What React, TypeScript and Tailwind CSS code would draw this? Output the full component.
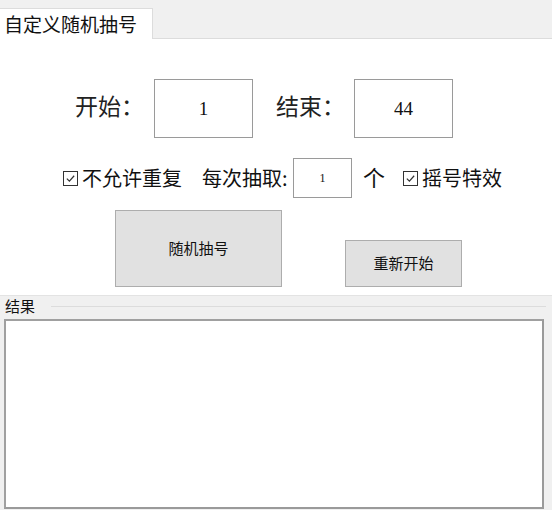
import { useState } from "react";

const cjk = "font-['Microsoft_YaHei','Noto_Sans_CJK_SC',sans-serif]";
const serif = "font-['Liberation_Serif','Noto_Sans_CJK_SC',serif]";

function Check({ label, checked }: { label: string; checked: boolean }) {
  return (
    <label className="flex items-center">
      <span className="mr-[4px] flex h-[15px] w-[15px] items-center justify-center border border-[#333]">
        {checked && (
          <svg viewBox="0 0 12 12" className="h-[11px] w-[11px]">
            <path d="M2 6.2 L4.8 9 L10 3" fill="none" stroke="#333" strokeWidth="1.3" />
          </svg>
        )}
      </span>
      <span>{label}</span>
    </label>
  );
}

export default function App() {
  const [start, setStart] = useState("1");
  const [end, setEnd] = useState("44");
  const [count, setCount] = useState("1");

  return (
    <div className={`h-[510px] w-[552px] overflow-hidden bg-[#f0f0f0] ${cjk} text-[#111]`}>
      {/* tab strip */}
      <div className="flex h-[39px] items-end border-b border-[#dcdcdc]">
        <div className="-mb-px flex h-[31px] w-[153px] items-center border-r border-t border-[#dcdcdc] bg-white pl-[4px] text-[19px]">
          自定义随机抽号
        </div>
      </div>

      {/* tab page */}
      <div className="h-[257px] border-b border-[#e3e3e3] bg-white">
        <div className="flex items-center pt-[40px] pl-[75px]">
          <span className={`${serif} w-[79px] text-[23px] text-[#222]`}>开始：</span>
          <input
            value={start}
            onChange={(e) => setStart(e.target.value)}
            className={`${serif} h-[59px] w-[99px] border border-[#9a9a9a] text-center text-[19px] outline-none`}
          />
          <span className={`${serif} ml-[23px] w-[78px] text-[23px] text-[#222]`}>结束：</span>
          <input
            value={end}
            onChange={(e) => setEnd(e.target.value)}
            className={`${serif} h-[59px] w-[99px] border border-[#9a9a9a] text-center text-[19px] outline-none`}
          />
        </div>

        <div className="mt-[20px] flex h-[40px] items-center pl-[63px] text-[20px]">
          <Check label="不允许重复" checked />
          <span className="ml-[20px] w-[91px] whitespace-nowrap">每次抽取:</span>
          <input
            value={count}
            onChange={(e) => setCount(e.target.value)}
            className={`${serif} h-[40px] w-[59px] border border-[#9a9a9a] text-center text-[12px] outline-none`}
          />
          <span className={`${serif} ml-[11px] text-[22px]`}>个</span>
          <span className="ml-[18px]">
            <Check label="摇号特效" checked />
          </span>
        </div>

        <div className="mt-[12px] flex items-end pl-[115px]">
          <button className="h-[77px] w-[167px] border border-[#adadad] bg-[#e1e1e1] text-[15px]">
            随机抽号
          </button>
          <button className="ml-[63px] h-[47px] w-[117px] border border-[#adadad] bg-[#e1e1e1] text-[15px]">
            重新开始
          </button>
        </div>
      </div>

      {/* result group */}
      <div className="relative px-[4px] pt-[1px]">
        <div className="flex items-center">
          <span className="pl-px text-[15px] leading-[18px]">结果</span>
          <div className="ml-[16px] mr-[2px] h-px flex-1 bg-[#dcdcdc]" />
        </div>
        <textarea
          readOnly
          className="mt-[4px] block h-[190px] w-[540px] resize-none border-2 border-[#a0a0a0] border-b-[#9a9a9a] border-r-[#9a9a9a] bg-white outline-none"
        />
      </div>
    </div>
  );
}
